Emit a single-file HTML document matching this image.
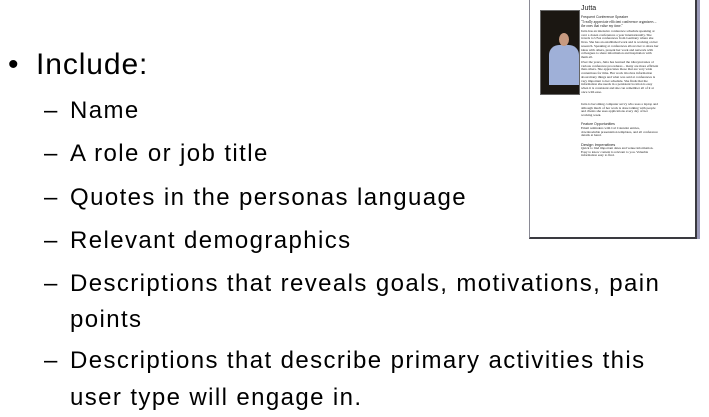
<!DOCTYPE html>
<html><head><meta charset="utf-8"><style>
body{margin:0;width:709px;height:417px;background:#fff;position:relative;overflow:hidden;font-family:"Liberation Sans",sans-serif;color:#000}
.l{position:absolute;font-size:24px;line-height:24px;white-space:nowrap;letter-spacing:1.4px}
.d{position:absolute;left:44px;font-size:24px;line-height:24px}
#frame{position:absolute;left:529px;top:-2px;width:165px;height:238px;border:1px solid #8a8a95;border-right:2px solid #3a3a40;border-bottom:2px solid #3a3a40;background:#fff;box-shadow:3px 0 0 #9a9ab8}
.t{position:absolute;left:51px;width:78px;font-family:"Liberation Serif",serif;font-size:3.4px;line-height:3.7px;color:#222;overflow:hidden}
</style></head><body>
<div style="position:absolute;left:8px;top:50px;font-size:30px;line-height:30px">•</div>
<div class="l" style="left:36px;top:50px;font-size:30px;line-height:30px;letter-spacing:0.9px">Include:</div>
<div class="d" style="top:99px">–</div><div class="l" style="left:70px;top:99px">Name</div>
<div class="d" style="top:142px">–</div><div class="l" style="left:70px;top:142px">A role or job title</div>
<div class="d" style="top:186px">–</div><div class="l" style="left:70px;top:186px">Quotes in the personas language</div>
<div class="d" style="top:229px">–</div><div class="l" style="left:70px;top:229px">Relevant demographics</div>
<div class="d" style="top:272px">–</div><div class="l" style="left:70px;top:272px">Descriptions that reveals goals, motivations, pain</div>
<div class="l" style="left:70px;top:308px">points</div>
<div class="d" style="top:349px">–</div><div class="l" style="left:70px;top:349px">Descriptions that describe primary activities this</div>
<div class="l" style="left:70px;top:386px">user type will engage in.</div>
<div id="frame">
 <div style="position:absolute;left:10px;top:11px;width:38px;height:83px;background:#1b1712;border:1px solid #666;overflow:hidden">
  <div style="position:absolute;left:8px;top:34px;width:30px;height:40px;background:#9fb0d8;border-radius:10px 10px 0 0"></div>
  <div style="position:absolute;left:18px;top:22px;width:10px;height:13px;background:#c79a80;border-radius:50%"></div>
 </div>
 <div style="position:absolute;left:51px;top:6px;font-size:7px;color:#222">Jutta</div>
 <div style="position:absolute;left:51px;top:16px;font-size:3.5px;color:#222">Frequent Conference Speaker</div>
 <div class="t" style="top:21px;font-size:3.6px;line-height:4.2px;height:9px">"I really appreciate efficient conference organizers – the ones that value my time."</div>
 <div class="t" style="top:31px;height:28px">Jutta has an intensive conference schedule speaking at over a dozen conferences a year internationally. She travels to USA conferences from Germany where she lives. She has an established work and is working on her research. Speaking at conferences allows her to share her ideas with others, present her work and network with colleagues to share information and inspiration with them all.</div>
 <div class="t" style="top:62px;height:38px">Over the years, Jutta has learned the idiosyncrasies of various conference procedures – many are more efficient than others. She appreciates those that are very wide contentious for time. Her work involves information about many things and what was said at conferences is very important to her schedule. She finds that the information she needs in a persistent location is easy when it is consistent and she can remember all of it at once with ease.</div>
 <div class="t" style="top:104px;height:14px">Jutta is becoming computer savvy who uses a laptop and although much of her work is done talking with people and clients she uses applications every day of her working week.</div>
 <div style="position:absolute;left:51px;top:123px;font-size:3.5px;color:#222">Feature Opportunities</div>
 <div class="t" style="top:128px;height:11px">Email reminders with Cal Calendar entries, downloadable presentation templates, and all conference details at hand.</div>
 <div style="position:absolute;left:51px;top:143px;font-size:4px;color:#222">Design Imperatives</div>
 <div class="t" style="top:148px;height:11px">Quick to find important dates and venue information. Easy to know content is relevant to you. Valuable information easy to find.</div>
</div>
</body></html>
